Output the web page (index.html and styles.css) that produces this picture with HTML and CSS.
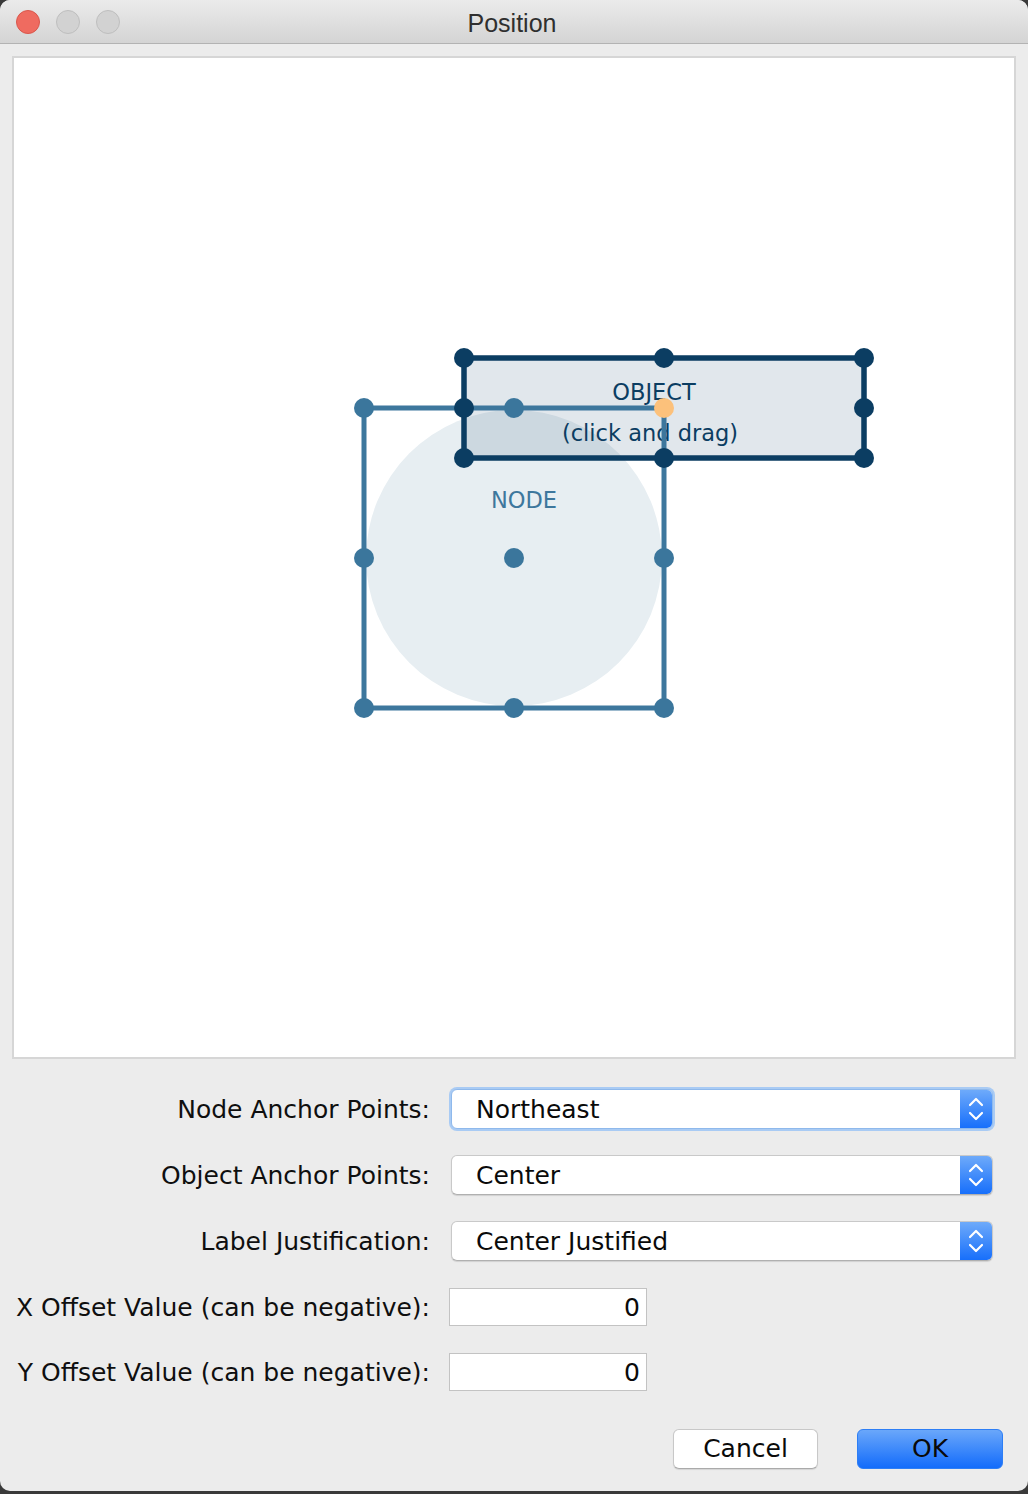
FILE: index.html
```html
<!DOCTYPE html>
<html>
<head>
<meta charset="utf-8">
<title>Position</title>
<link rel="stylesheet" href="styles.css">
</head>
<body>
<div class="window">
  <div class="titlebar">
    <div class="lights">
      <span class="light red"></span>
      <span class="light gray"></span>
      <span class="light gray"></span>
    </div>
    <div class="title">Position</div>
    <div></div>
  </div>
  <div class="content">
    <div class="canvas">
      <svg class="diagram" width="1000" height="999" viewBox="14 58 1000 999" xmlns="http://www.w3.org/2000/svg">
        <circle cx="514" cy="558" r="148" fill="#e7eef2"/>
        <rect x="464" y="358" width="400" height="100" fill="rgba(11,61,98,0.12)"/>
        <text x="654" y="400" class="t-obj" text-anchor="middle">OBJECT</text>
        <text x="650" y="441" class="t-obj" text-anchor="middle">(click and drag)</text>
        <text x="524" y="508" class="t-node" text-anchor="middle">NODE</text>
        <rect x="364" y="408" width="300" height="300" fill="none" stroke="#3d779d" stroke-width="5"/>
        <rect x="464" y="358" width="400" height="100" fill="none" stroke="#0b3d62" stroke-width="5.5"/>
        <g fill="#3b769c">
          <circle cx="364" cy="408" r="10"/>
          <circle cx="514" cy="408" r="10"/>
          <circle cx="364" cy="558" r="10"/>
          <circle cx="514" cy="558" r="10"/>
          <circle cx="664" cy="558" r="10"/>
          <circle cx="364" cy="708" r="10"/>
          <circle cx="514" cy="708" r="10"/>
          <circle cx="664" cy="708" r="10"/>
        </g>
        <g fill="#0b3d62">
          <circle cx="464" cy="358" r="10"/>
          <circle cx="664" cy="358" r="10"/>
          <circle cx="864" cy="358" r="10"/>
          <circle cx="464" cy="408" r="10"/>
          <circle cx="864" cy="408" r="10"/>
          <circle cx="464" cy="458" r="10"/>
          <circle cx="664" cy="458" r="10"/>
          <circle cx="864" cy="458" r="10"/>
        </g>
        <circle cx="664" cy="408" r="10" fill="#fcc17b"/>
      </svg>
    </div>
    <div class="form">
      <div class="row">
        <div class="label">Node Anchor Points:</div>
        <div class="popup focus">
          <span class="popup-text">Northeast</span>
          <span class="stepper"><svg width="32" height="38" viewBox="0 0 32 38"><polyline points="10,15 16,9 22,15" fill="none" stroke="#fff" stroke-width="2.2" stroke-linecap="round" stroke-linejoin="round"/><polyline points="10,23 16,29 22,23" fill="none" stroke="#fff" stroke-width="2.2" stroke-linecap="round" stroke-linejoin="round"/></svg></span>
        </div>
      </div>
      <div class="row">
        <div class="label">Object Anchor Points:</div>
        <div class="popup">
          <span class="popup-text">Center</span>
          <span class="stepper"><svg width="32" height="38" viewBox="0 0 32 38"><polyline points="10,15 16,9 22,15" fill="none" stroke="#fff" stroke-width="2.2" stroke-linecap="round" stroke-linejoin="round"/><polyline points="10,23 16,29 22,23" fill="none" stroke="#fff" stroke-width="2.2" stroke-linecap="round" stroke-linejoin="round"/></svg></span>
        </div>
      </div>
      <div class="row">
        <div class="label">Label Justification:</div>
        <div class="popup">
          <span class="popup-text">Center Justified</span>
          <span class="stepper"><svg width="32" height="38" viewBox="0 0 32 38"><polyline points="10,15 16,9 22,15" fill="none" stroke="#fff" stroke-width="2.2" stroke-linecap="round" stroke-linejoin="round"/><polyline points="10,23 16,29 22,23" fill="none" stroke="#fff" stroke-width="2.2" stroke-linecap="round" stroke-linejoin="round"/></svg></span>
        </div>
      </div>
      <div class="row">
        <div class="label">X Offset Value (can be negative):</div>
        <div class="field">0</div>
      </div>
      <div class="row last">
        <div class="label">Y Offset Value (can be negative):</div>
        <div class="field">0</div>
      </div>
    </div>
    <div class="buttons">
      <div class="btn cancel">Cancel</div>
      <div class="btn ok">OK</div>
    </div>
  </div>
</div>
</body>
</html>
```

FILE: styles.css
```css
html, body {
  margin: 0;
  padding: 0;
}
body {
  background: #3a3a3a;
  font-family: "DejaVu Sans", "Noto Sans", sans-serif;
  color: #111;
}
.window {
  width: 1028px;
  height: 1491px;
  background: #ececec;
  border-radius: 10px;
  overflow: hidden;
  display: flex;
  flex-direction: column;
}
.titlebar {
  height: 43px;
  border-bottom: 1px solid #b3b3b3;
  background: linear-gradient(#ebebeb, #d4d4d4);
  display: grid;
  grid-template-columns: 1fr auto 1fr;
  align-items: center;
}
.lights {
  display: flex;
  gap: 16px;
  padding-left: 16px;
}
.light {
  width: 24px;
  height: 24px;
  box-sizing: border-box;
  border-radius: 50%;
  display: block;
}
.light.red {
  background: #ef6b60;
  border: 1px solid #d9574c;
}
.light.gray {
  background: #d2d2d2;
  border: 1px solid #bebebe;
}
.title {
  font-family: "Liberation Sans", "Noto Sans", sans-serif;
  font-size: 25px;
  color: #2f2f2f;
  margin-left: -4px;
  padding-top: 3px;
}
.content {
  padding: 12px 12px 0;
  flex: 1;
  display: flex;
  flex-direction: column;
}
.canvas {
  height: 1003px;
  box-sizing: border-box;
  border: 2px solid #d6d6d6;
  background: #fff;
}
.diagram {
  display: block;
}
.t-obj {
  font-family: "DejaVu Sans", sans-serif;
  font-size: 22.5px;
  fill: #0b3d62;
}
.t-node {
  font-family: "DejaVu Sans", sans-serif;
  font-size: 22.5px;
  fill: #3d779d;
}
.form {
  padding-top: 17px;
}
.row {
  display: flex;
  align-items: center;
  height: 66px;
}
.row.last {
  height: 64px;
}
.label {
  width: 418px;
  text-align: right;
  font-size: 25px;
  color: #0f0f0f;
  flex: none;
  white-space: nowrap;
}
.popup {
  margin-left: 21px;
  width: 542px;
  height: 40px;
  box-sizing: border-box;
  background: #fff;
  border: 1px solid #c9c9c9;
  border-bottom-color: #b0b0b0;
  border-radius: 6px;
  display: flex;
  align-items: center;
  overflow: hidden;
  box-shadow: 0 1px 1px rgba(0,0,0,0.12);
}
.popup.focus {
  border-color: #8fb9ec;
  box-shadow: 0 0 0 2px #a9cbf4;
}
.popup-text {
  flex: 1;
  padding-left: 24px;
  font-size: 25px;
  color: #0a0a0a;
}
.stepper {
  width: 32px;
  height: 100%;
  background: linear-gradient(#6eaafa, #176ffb);
  display: flex;
  align-items: center;
  justify-content: center;
}
.stepper svg {
  display: block;
}
.field {
  margin-left: 19px;
  width: 198px;
  height: 38px;
  box-sizing: border-box;
  background: #fff;
  border: 1px solid #c3c3c3;
  text-align: right;
  padding-right: 6px;
  font-size: 25px;
  line-height: 38px;
  color: #0a0a0a;
}
.buttons {
  display: flex;
  justify-content: flex-end;
  gap: 39px;
  margin-top: 25px;
  padding-right: 13px;
}
.btn {
  height: 40px;
  box-sizing: border-box;
  border-radius: 6px;
  font-size: 25px;
  line-height: 38px;
  text-align: center;
  color: #0a0a0a;
}
.btn.cancel {
  width: 145px;
  background: #fff;
  border: 1px solid #c8c8c8;
  border-bottom-color: #aaaaaa;
  box-shadow: 0 1px 1px rgba(0,0,0,0.1);
}
.btn.ok {
  width: 146px;
  background: linear-gradient(#6aa7fa, #136cfb);
  border: 1px solid #2d7ef5;
}
```
